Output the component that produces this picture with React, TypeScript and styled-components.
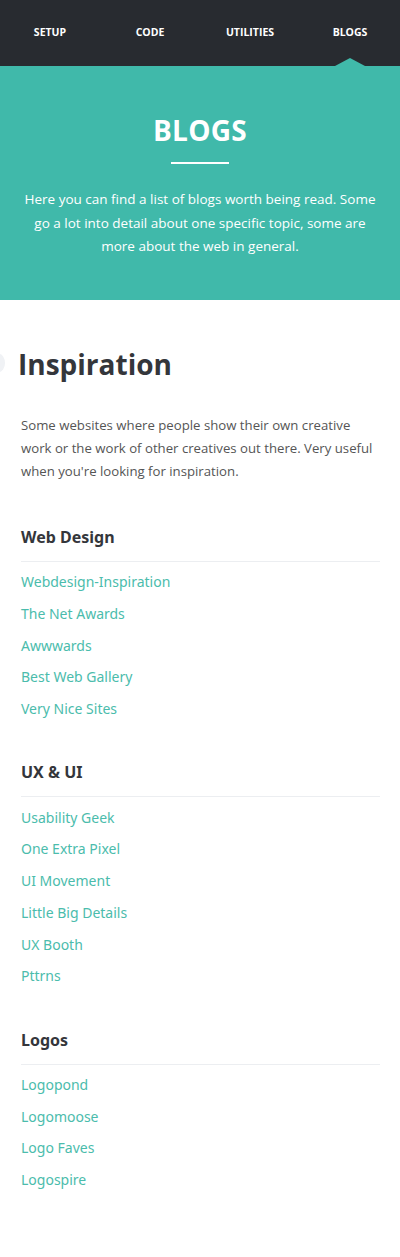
import React from "react";
import styled, { createGlobalStyle } from "styled-components";

const Global = createGlobalStyle`
  html, body { margin: 0; padding: 0; background: #fff; }
  body { font-family: "Open Sans", "Noto Sans", sans-serif; }
  * { box-sizing: border-box; }
`;

const Nav = styled.nav`
  background: #282b30;
  height: 66px;
  display: grid;
  grid-template-columns: repeat(4, 1fr);
  align-items: center;
`;

const NavItem = styled.a<{ $active?: boolean }>`
  position: relative;
  height: 66px;
  display: flex;
  align-items: center;
  justify-content: center;
  color: #fff;
  font-family: "Open Sans", sans-serif;
  font-weight: 700;
  font-size: 10.5px;
  text-transform: uppercase;
  padding-bottom: 2px;
  text-decoration: none;
  ${(p) =>
    p.$active &&
    `
    &::after {
      content: "";
      position: absolute;
      bottom: 0;
      left: 50%;
      margin-left: -15px;
      border-left: 15px solid transparent;
      border-right: 15px solid transparent;
      border-bottom: 8px solid #40b9aa;
    }
  `}
`;

const Hero = styled.header`
  background: #40b9aa;
  height: 234px;
  padding: 48px 20px 0;
  display: flex;
  flex-direction: column;
  align-items: center;
  color: #fff;
  text-align: center;
`;

const HeroTitle = styled.h1`
  margin: 0;
  font-family: "Open Sans", sans-serif;
  font-weight: 700;
  font-size: 28px;
  line-height: 32px;
  letter-spacing: 0.3px;
`;

const HeroRule = styled.div`
  width: 58px;
  height: 2px;
  background: #fff;
  margin: 16px 0 24px;
`;

const HeroText = styled.p`
  margin: 0;
  font-family: "Open Sans", sans-serif;
  font-size: 13.5px;
  line-height: 23.5px;
  max-width: 360px;
`;

const Main = styled.main`
  position: relative;
  display: flex;
  flex-direction: column;
  padding: 44px 20px 60px 21px;
`;

const GhostIcon = styled.span`
  position: absolute;
  left: -7px;
  top: 54px;
  width: 12px;
  height: 18px;
  border-radius: 50%;
  background: #f0f2f5;
`;

const SectionTitle = styled.h2`
  margin: 0 0 0 -3px;
  font-family: "Open Sans", sans-serif;
  font-weight: 700;
  font-size: 28px;
  line-height: 40px;
  color: #34363b;
`;

const Intro = styled.p`
  margin: 30px 0 6px;
  font-family: "Open Sans", sans-serif;
  font-size: 13.2px;
  line-height: 23px;
  color: #555;
`;

const Group = styled.section`
  margin-top: 36px;
`;

const GroupTitle = styled.h3`
  margin: 0;
  font-family: "Noto Sans", "Open Sans", sans-serif;
  font-weight: 700;
  font-size: 16px;
  line-height: 24px;
  color: #34363b;
  padding-bottom: 12px;
  border-bottom: 1px solid #eceef1;
`;

const LinkList = styled.ul`
  list-style: none;
  margin: 0;
  padding: 4px 0 0;
`;

const LinkItem = styled.li`
  height: 31.7px;
  display: flex;
  align-items: center;
`;

const Link = styled.a`
  font-family: "Noto Sans", "Open Sans", sans-serif;
  font-size: 14px;
  color: #4bbcac;
  text-decoration: none;
`;

const groups = [
  {
    title: "Web Design",
    links: [
      "Webdesign-Inspiration",
      "The Net Awards",
      "Awwwards",
      "Best Web Gallery",
      "Very Nice Sites",
    ],
  },
  {
    title: "UX & UI",
    links: [
      "Usability Geek",
      "One Extra Pixel",
      "UI Movement",
      "Little Big Details",
      "UX Booth",
      "Pttrns",
    ],
  },
  {
    title: "Logos",
    links: ["Logopond", "Logomoose", "Logo Faves", "Logospire"],
  },
];

export default function App() {
  return (
    <>
      <Global />
      <Nav>
        <NavItem>Setup</NavItem>
        <NavItem>Code</NavItem>
        <NavItem>Utilities</NavItem>
        <NavItem $active>Blogs</NavItem>
      </Nav>
      <Hero>
        <HeroTitle>BLOGS</HeroTitle>
        <HeroRule />
        <HeroText>
          Here you can find a list of blogs worth being read. Some go a lot
          into detail about one specific topic, some are more about the web in
          general.
        </HeroText>
      </Hero>
      <Main>
        <GhostIcon />
        <SectionTitle>Inspiration</SectionTitle>
        <Intro>
          Some websites where people show their own creative work or the work
          of other creatives out there. Very useful when you're looking for
          inspiration.
        </Intro>
        {groups.map((g) => (
          <Group key={g.title}>
            <GroupTitle>{g.title}</GroupTitle>
            <LinkList>
              {g.links.map((l) => (
                <LinkItem key={l}>
                  <Link href="#">{l}</Link>
                </LinkItem>
              ))}
            </LinkList>
          </Group>
        ))}
      </Main>
    </>
  );
}
